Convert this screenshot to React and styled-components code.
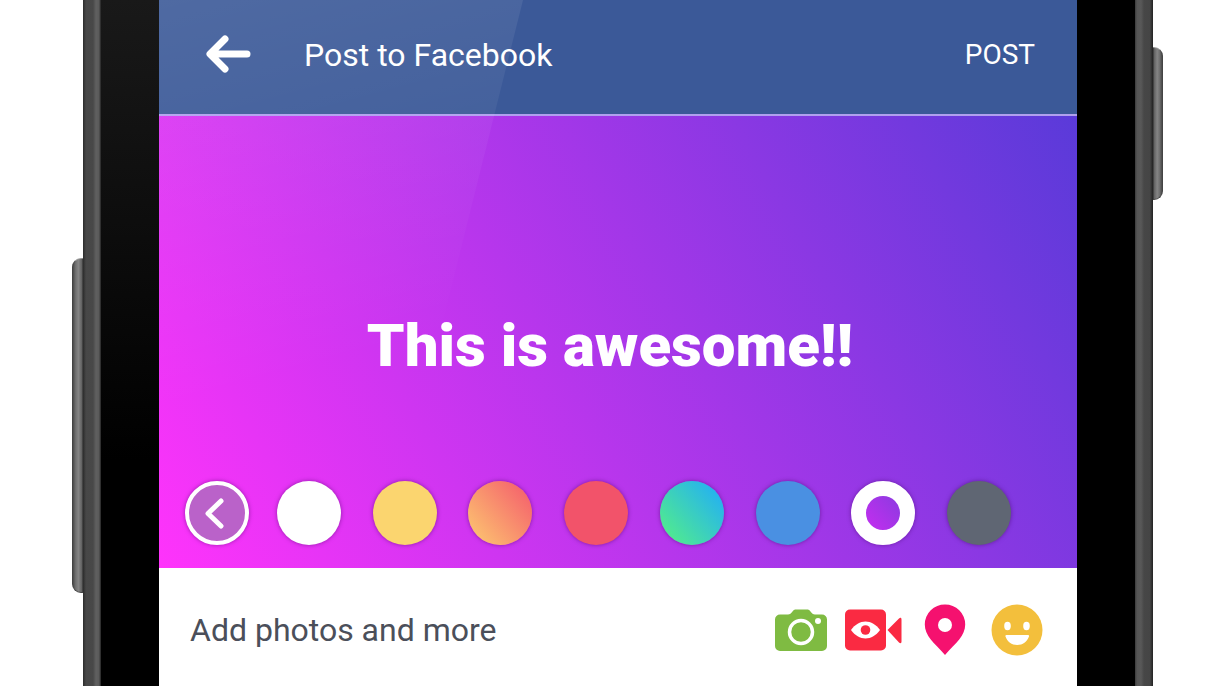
import styled, { createGlobalStyle } from "styled-components";

const GlobalStyle = createGlobalStyle`
  * {
    box-sizing: border-box;
  }
  body {
    margin: 0;
    background: #fff;
    font-family: Roboto, "Liberation Sans", sans-serif;
  }
  button {
    border: 0;
    padding: 0;
    background: none;
    color: inherit;
    font: inherit;
    cursor: pointer;
  }
`;

const Phone = styled.div`
  display: flex;
  min-height: 100vh;
  padding: 0 57px 0 72px;
`;

const Rail = styled.div`
  flex: none;
  width: ${(props) => (props.$side === "left" ? "11px" : "10px")};
  padding-top: ${(props) => props.$top};
`;

const SideKey = styled.div`
  height: ${(props) => props.$length};
  border: 1px solid #444;
  border-top-color: #999;
  background: ${(props) =>
    props.$side === "left"
      ? "linear-gradient(to right, #4a4a4a, #707070 30%, #858585 60%, #5f5f5f)"
      : "linear-gradient(to right, #5f5f5f, #858585 40%, #707070 70%, #4a4a4a)"};
  border-radius: ${(props) =>
    props.$side === "left" ? "9px 0 0 9px" : "0 9px 9px 0"};
`;

const Edge = styled.div`
  flex: none;
  width: 18px;
  background: ${(props) =>
    props.$side === "left"
      ? "linear-gradient(to right, #2c2c2c, #474747 3px, #484848 10px, #606060 13px, #5a5a5a 16px, #222)"
      : "linear-gradient(to right, #3a3a3a, #555 2px, #585858 6px, #474747 9px, #454545 15px, #222)"};
`;

const Bezel = styled.div`
  flex: none;
  width: 58px;
  background: ${(props) =>
    props.$shiny ? "linear-gradient(to bottom, #191919, #000 460px)" : "#000"};
`;

const Screen = styled.main`
  position: relative;
  flex: 1;
  min-width: 0;
  display: flex;
  flex-direction: column;
  background: #fff;
`;

const Glare = styled.div`
  position: absolute;
  top: 0;
  left: 0;
  width: 364px;
  height: 452px;
  background: linear-gradient(
    165deg,
    rgba(255, 255, 255, 0.1),
    rgba(255, 255, 255, 0.03) 50%,
    rgba(255, 255, 255, 0) 75%
  );
  clip-path: polygon(0 0, 100% 0, 69% 100%, 0 100%);
  pointer-events: none;
`;

const Header = styled.header`
  display: flex;
  align-items: center;
  height: 116px;
  padding: 0 42px 4px 47px;
  background: #3b5998;
  border-bottom: 2px solid #b0a0ee;
  color: #fff;
`;

const BackButton = styled.button`
  display: flex;
  margin-right: 52px;
`;

const Title = styled.h1`
  flex: 1;
  margin: 0;
  font-size: 32px;
  line-height: 40px;
  font-weight: 400;
`;

const PostButton = styled.button`
  font-size: 28px;
  line-height: 40px;
`;

const Canvas = styled.section`
  flex: 1;
  display: flex;
  flex-direction: column;
  background: linear-gradient(60deg, #ff33fb, #5a3ad9);
`;

const PostText = styled.input`
  flex: 1;
  width: 100%;
  min-height: 80px;
  padding: 94px 16px 0 0;
  border: 0;
  outline: 0;
  background: none;
  color: #fff;
  font-family: inherit;
  font-size: 60px;
  font-weight: 900;
  text-align: center;
`;

const Palette = styled.div`
  display: flex;
  gap: 28px;
  padding: 0 66px 23px 26px;
`;

const Swatches = styled.div`
  flex: 1;
  display: flex;
  justify-content: space-between;
`;

const Round = styled.button`
  display: flex;
  align-items: center;
  justify-content: center;
  width: 64px;
  height: 64px;
  border-radius: 50%;
  box-shadow: 0 0 4px rgba(60, 0, 90, 0.5);
`;

const Collapse = styled(Round)`
  border: 4px solid #fff;
  background: #ba62c9;
`;

const Swatch = styled(Round)`
  background: ${(props) => props.$fill};
  border: ${(props) => (props.$selected ? "15px solid #fff" : "0")};
`;

const Footer = styled.footer`
  display: flex;
  align-items: center;
  justify-content: space-between;
  min-height: 118px;
  padding: 6px 30px 0 31px;
  color: #4b4f5a;
`;

const Hint = styled.span`
  font-size: 32px;
  line-height: 40px;
`;

const Actions = styled.div`
  display: flex;
  gap: 12px;
`;

const Action = styled.button`
  display: flex;
  align-items: center;
  justify-content: center;
  width: 60px;
  height: 60px;
`;

const swatches = [
  { name: "White", fill: "#fff" },
  { name: "Yellow", fill: "#fbd56f" },
  { name: "Orange", fill: "linear-gradient(50deg, #fcc070 10%, #f5636c 90%)" },
  { name: "Red", fill: "#f2536a" },
  { name: "Green", fill: "linear-gradient(50deg, #50ea90 12%, #25b2f0 88%)" },
  { name: "Blue", fill: "#4a90e2" },
  {
    name: "Purple",
    fill: "linear-gradient(50deg, #c62df0, #8a3be0) padding-box",
    selected: true,
  },
  { name: "Gray", fill: "#5f6673" },
];

const ArrowIcon = () => (
  <svg width="46" height="40" viewBox="0 0 46 40" fill="none" stroke="#fff" strokeWidth="7" strokeLinecap="round" strokeLinejoin="round">
    <path d="M19 4 4 19 19 34M5 19h36" />
  </svg>
);

const ChevronIcon = () => (
  <svg width="56" height="56" viewBox="0 0 56 56" fill="none" stroke="#fff" strokeWidth="5" strokeLinecap="round" strokeLinejoin="round">
    <path d="M32 16 19 28.500 32 41" />
  </svg>
);

const CameraIcon = () => (
  <svg width="52" height="52" viewBox="0 0 52 52">
    <path
      fill="#7fbb42"
      d="M5 10.500h8c2 0 3-1 4.500-3C18.500 6 19.500 5.500 21 5.500h11c1.500 0 2.500.5 3.500 2 1.500 2 2.500 3 4.500 3h7a5 5 0 0 1 5 5V42a5 5 0 0 1-5 5H5a5 5 0 0 1-5-5V15.500a5 5 0 0 1 5-5z"
    />
    <circle cx="26" cy="28" r="11.500" fill="none" stroke="#fff" strokeWidth="3.500" />
    <circle cx="43" cy="17" r="3" fill="#fff" />
  </svg>
);

const VideoIcon = () => (
  <svg width="57" height="52" viewBox="0 0 57 52">
    <rect x="0" y="5.500" width="41" height="41" rx="5" fill="#fa2a42" />
    <path fill="#fa2a42" d="M42.500 26 54 14.500c1.500-1.200 2.500-.6 2.500 1v22c0 1.600-1 2.200-2.500 1z" />
    <path fill="#fff" d="M6 26c4-5.500 9-8.500 14.500-8.500S31 20.500 35 26c-4 5.500-9 8.500-14.500 8.500S10 31.500 6 26z" />
    <circle cx="20.500" cy="26" r="4.800" fill="#fa2a42" />
  </svg>
);

const PinIcon = () => (
  <svg width="42" height="52" viewBox="0 0 42 52">
    <path fill="#f5116f" d="M21 .5A20 20 0 0 1 41.200 20.500C41.200 32 32 38.500 21 51 10 38.500.8 32 .8 20.500A20 20 0 0 1 21 .5z" />
    <circle cx="21" cy="21" r="7" fill="#fff" />
  </svg>
);

const SmileIcon = () => (
  <svg width="52" height="52" viewBox="0 0 52 52">
    <circle cx="26" cy="26" r="25.500" fill="#f3bf3c" />
    <ellipse cx="16.500" cy="22" rx="3.300" ry="4.200" fill="#fff" />
    <ellipse cx="35.500" cy="22" rx="3.300" ry="4.200" fill="#fff" />
    <path fill="#fff" d="M15.500 31h21.500c1 0 1.300.6 1 1.500-1.800 5-6.300 8.500-11.800 8.500s-10-3.500-11.700-8.500c-.3-.9 0-1.500 1-1.500z" />
  </svg>
);

const App = () => {
  return (
    <>
      <GlobalStyle />
      <Phone>
        <Rail $side="left" $top="258px">
          <SideKey $side="left" $length="335px" />
        </Rail>
        <Edge $side="left" />
        <Bezel $shiny />
        <Screen>
          <Header>
            <BackButton aria-label="Back">
              <ArrowIcon />
            </BackButton>
            <Title>Post to Facebook</Title>
            <PostButton>POST</PostButton>
          </Header>
          <Canvas>
            <PostText aria-label="Post text" defaultValue="This is awesome!!" />
            <Palette>
              <Collapse aria-label="Hide backgrounds">
                <ChevronIcon />
              </Collapse>
              <Swatches>
                {swatches.map((item) => (
                  <Swatch
                    key={item.name}
                    aria-label={item.name}
                    $fill={item.fill}
                    $selected={item.selected}
                  />
                ))}
              </Swatches>
            </Palette>
          </Canvas>
          <Footer>
            <Hint>Add photos and more</Hint>
            <Actions>
              <Action aria-label="Photo">
                <CameraIcon />
              </Action>
              <Action aria-label="Live video">
                <VideoIcon />
              </Action>
              <Action aria-label="Location">
                <PinIcon />
              </Action>
              <Action aria-label="Feeling">
                <SmileIcon />
              </Action>
            </Actions>
          </Footer>
          <Glare />
        </Screen>
        <Bezel />
        <Edge $side="right" />
        <Rail $side="right" $top="47px">
          <SideKey $side="right" $length="153px" />
        </Rail>
      </Phone>
    </>
  );
};

export default App;
